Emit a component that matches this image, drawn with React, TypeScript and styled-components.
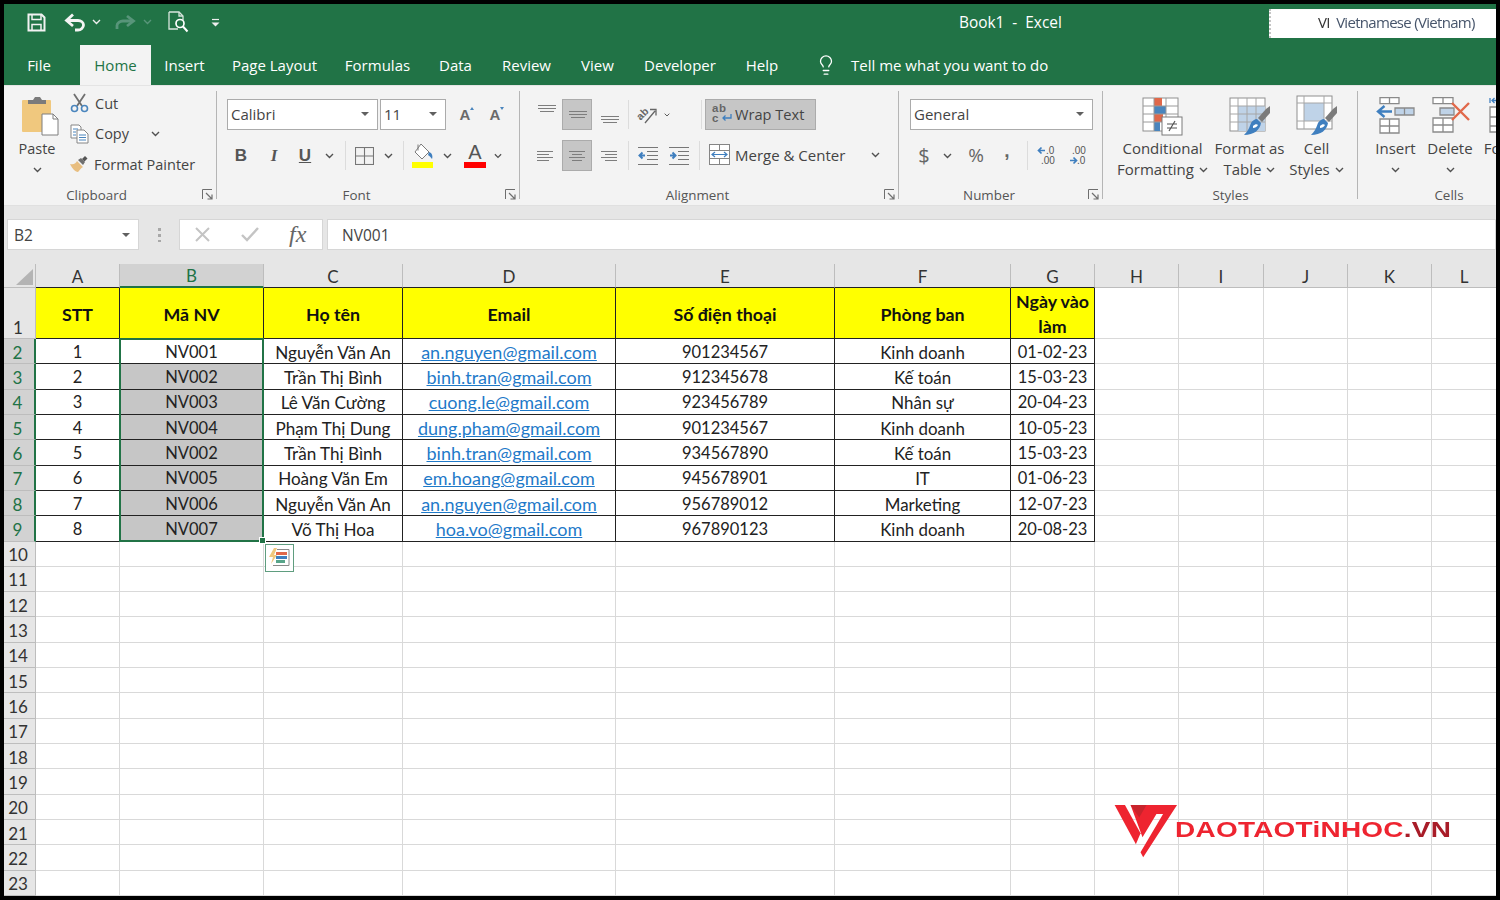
import React from "react";
import styled, { createGlobalStyle } from "styled-components";
import { Lightbulb } from "lucide-react";

const GREEN = "#217346";
const UI_FONT = `"Open Sans", "Noto Sans", sans-serif`;
const CELL_FONT = `Lato, "Noto Sans", sans-serif`;

const GlobalStyle = createGlobalStyle`
  html, body { margin: 0; padding: 0; background: #000; }
  body { width: 1500px; height: 900px; overflow: hidden; }
  * { box-sizing: border-box; }
`;

/* ---------- small drawings ---------- */

const Chevron = ({ c = "#505050" }: { c?: string }) => (
  <svg width="9" height="6" viewBox="0 0 9 6">
    <path d="M1 1l3.5 3.5L8 1" fill="none" stroke={c} strokeWidth="1.4" />
  </svg>
);

const Caret = () => (
  <svg width="8" height="4" viewBox="0 0 8 4">
    <path d="M0 0h8L4 4z" fill="#606060" />
  </svg>
);

const SaveIcon = () => (
  <svg width="19" height="19" viewBox="0 0 19 19" fill="none" stroke="#f2f2f2" strokeWidth="2">
    <path d="M1.5 1.5h13l3 3v13h-16z" />
    <path d="M5 1.5v5h9v-5" strokeWidth="1.5" />
    <path d="M5 17.5v-6h9v6" strokeWidth="1.5" />
  </svg>
);

const UndoIcon = ({ c }: { c: string }) => (
  <svg width="22" height="19" viewBox="0 0 22 19" fill="none" stroke={c} strokeWidth="2.8">
    <path d="M9 1.5L2.5 7.5 9 13" />
    <path d="M3 7.5h11c3 0 5.5 2 5.5 4.500s-2.500 5-5.500 5h-3" />
  </svg>
);

const RedoIcon = ({ c }: { c: string }) => (
  <svg width="22" height="19" viewBox="0 0 22 19" fill="none" stroke={c} strokeWidth="2.8">
    <path d="M13 3l6.500 5L13 13" />
    <path d="M19 8H9c-3 0-6 2-6 4.500V16" />
  </svg>
);

const PreviewIcon = () => (
  <svg width="21" height="22" viewBox="0 0 21 22" fill="none" stroke="#d8e6de" strokeWidth="1.3">
    <path d="M1 1h10l4 4v4M1 1v17h9" />
    <path d="M11 1v4h4" />
    <circle cx="12" cy="12.500" r="4" strokeWidth="1.700" stroke="#fff" />
    <path d="M15 15.500l4.500 5" strokeWidth="2" stroke="#fff" />
  </svg>
);

const CustomizeIcon = () => (
  <svg width="9" height="9" viewBox="0 0 9 9">
    <path d="M1 1.500h7" stroke="#eee" strokeWidth="1.200" />
    <path d="M0.500 4.500h8L4.500 8.500z" fill="#eee" />
  </svg>
);

const PasteIcon = () => (
  <svg width="40" height="40" viewBox="0 0 40 40">
    <rect x="1" y="4" width="29" height="32" rx="1" fill="#f0c87e" />
    <path d="M7 4h5l2-3h5l2 3h4v4H7z" fill="#7b7b7b" />
    <path d="M21 18h11l5 5v16H21z" fill="#fff" stroke="#7f7f7f" />
    <path d="M32 18v5h5" fill="none" stroke="#7f7f7f" />
  </svg>
);

const CutIcon = () => (
  <svg width="19" height="20" viewBox="0 0 19 20" fill="none">
    <path d="M4 1l8 12M15 1L7 13" stroke="#6f6f6f" strokeWidth="1.800" />
    <circle cx="4.500" cy="15.500" r="3" stroke="#4a85bd" strokeWidth="1.600" />
    <circle cx="14.500" cy="15.500" r="3" stroke="#4a85bd" strokeWidth="1.600" />
  </svg>
);

const CopyIcon = () => (
  <svg width="19" height="20" viewBox="0 0 19 20" fill="#fff" stroke="#858585">
    <path d="M1 1h8l2 2v11H1z" />
    <path d="M7 6h7l4 4v9H7z" />
    <path d="M3 5h5M3 8h3M3 11h3M9 11h7M9 13.500h7M9 16h7" stroke="#4a85bd" />
  </svg>
);

const PainterIcon = () => (
  <svg width="18" height="17" viewBox="0 0 18 17">
    <path d="M0 8c4 1 6-1 7-3l6 6c-2 1-4 4-5 5-3 0-6-4-8-8z" fill="#e8be80" />
    <path d="M8 4l3-2 4 4-2 3z" fill="#6f6f6f" />
    <path d="M12 3l3-3 2.500 2.500-3 3z" fill="#555" />
  </svg>
);

const BordersIcon = () => (
  <svg width="19" height="18" viewBox="0 0 19 18" fill="none" stroke="#767676" strokeWidth="1.100">
    <rect x="0.500" y="0.500" width="18" height="17" />
    <path d="M9.500 0.500v17M0.500 9h18" />
  </svg>
);

const FillIcon = () => (
  <svg width="22" height="25" viewBox="0 0 22 25">
    <path d="M9 1l8 8-7 7-7-7z" fill="#fff" stroke="#7b7b7b" />
    <path d="M6 1.500v6" stroke="#7b7b7b" />
    <path d="M17 9c3 1 4 4 3 7-1-1-2-3-4-4z" fill="#3f7fbf" />
    <rect x="0" y="19" width="21" height="6" fill="#ffff00" />
  </svg>
);

const Lines = ({ rows }: { rows: number[][] }) => (
  <svg width="22" height="22" viewBox="0 0 22 22" stroke="#7d7d7d" strokeWidth="1">
    {rows.map(([a, b, y]) => (
      <path key={`${a}-${y}`} d={`M${a} ${y + 0.5}H${b}`} />
    ))}
  </svg>
);

const OrientIcon = () => (
  <svg width="24" height="24" viewBox="0 0 24 24">
    <text x="2" y="15" transform="rotate(-45 7 12)" fontFamily="Liberation Sans" fontWeight="700" fontSize="10.500" fill="#666">ab</text>
    <path d="M10 20L20 8M15 6.500h6v6" fill="none" stroke="#666" strokeWidth="1.300" />
  </svg>
);

const IndentIcon = ({ out }: { out?: boolean }) => (
  <svg width="20" height="18" viewBox="0 0 20 18">
    <path d="M0 0.500h20M9 4.500h11M9 8.500h11M9 12.500h11M0 17.500h20" stroke="#777" fill="none" />
    {out ? (
      <path d="M7 8.500H2M4.500 5.500L1.500 8.500l3 3" stroke="#3f7fbf" strokeWidth="2" fill="none" />
    ) : (
      <path d="M1 8.500h5M3.500 5.500l3 3-3 3" stroke="#3f7fbf" strokeWidth="2" fill="none" />
    )}
  </svg>
);

const WrapIcon = () => (
  <svg width="23" height="25" viewBox="0 0 23 25">
    <text x="1" y="11" fontFamily="Liberation Sans" fontWeight="700" fontSize="11.500" fill="#666" letterSpacing="0.6">ab</text>
    <text x="1" y="21" fontFamily="Liberation Sans" fontWeight="700" fontSize="11.500" fill="#666">c</text>
    <path d="M20 13v4h-8M14.500 14.500l-2.500 2.500 2.500 2.500" fill="none" stroke="#3f7fbf" strokeWidth="1.300" />
  </svg>
);

const MergeIcon = () => (
  <svg width="21" height="21" viewBox="0 0 21 21" fill="none" stroke="#858585">
    <rect x="0.500" y="0.500" width="20" height="20" fill="#fff" />
    <path d="M0.500 6.500h20M0.500 14.500h20M10.500 0.500v6M10.500 14.500v6" />
    <path d="M3 10.500h15M6 8l-3 2.500L6 13M15 8l3 2.500-3 2.500" stroke="#3f7fbf" strokeWidth="1.200" />
  </svg>
);

const DecimalIcon = ({ more }: { more?: boolean }) => (
  <svg width="20" height="22" viewBox="0 0 20 22" fontFamily="Liberation Sans" fontSize="10" fill="#555">
    {more ? (
      <>
        <path d="M8 5.500H2M4.500 2.500l-3 3 3 3" stroke="#3f7fbf" strokeWidth="1.700" fill="none" />
        <text x="9" y="9">.0</text>
        <text x="4" y="19">.00</text>
      </>
    ) : (
      <>
        <text x="4" y="9">.00</text>
        <path d="M2 15.500h6M5.500 12.500l3 3-3 3" stroke="#3f7fbf" strokeWidth="1.700" fill="none" />
        <text x="9" y="19">.0</text>
      </>
    )}
  </svg>
);

const CondIcon = () => (
  <svg width="42" height="39" viewBox="0 0 42 39">
    <rect x="1" y="1" width="35" height="33" fill="#fff" stroke="#8f8f8f" />
    <rect x="12" y="1" width="8" height="8" fill="#e0684a" />
    <rect x="12" y="9" width="12" height="8" fill="#4a85bd" />
    <rect x="12" y="17" width="9" height="8" fill="#e0684a" />
    <rect x="12" y="25" width="6" height="9" fill="#4a85bd" />
    <path d="M1 9h35M1 17h35M1 25h35M12 1v33M24 1v33" stroke="#9a9a9a" fill="none" />
    <rect x="20" y="20" width="20" height="18" fill="#fff" stroke="#7b7b7b" />
    <path d="M25 27h10M25 31h10M33 24l-6 10" stroke="#555" strokeWidth="1.200" fill="none" />
  </svg>
);

const BrushTip = () => (
  <>
    <path d="M37 12l4-3v7l-8 9-4-4z" fill="#7b7b7b" />
    <path d="M28 22l4 4c-1 7-7 12-17 12 3-3 5-6 7-12 1-2 4-4 6-4z" fill="#3f7fbf" />
    <path d="M24 29c2-2 4-2 5-1-1 2-3 3-5 3z" fill="#fff" />
  </>
);

const TableStyleIcon = () => (
  <svg width="42" height="39" viewBox="0 0 42 39">
    <rect x="1" y="1" width="35" height="33" fill="#fff" stroke="#8f8f8f" />
    <rect x="9" y="9" width="27" height="25" fill="#bfd3e8" />
    <path d="M1 9h35M1 17h35M1 25h35M9 1v33M18 1v33M27 1v33" stroke="#a6a6a6" fill="none" />
    <BrushTip />
  </svg>
);

const CellStyleIcon = () => (
  <svg width="42" height="41" viewBox="0 0 42 41">
    <g transform="translate(0 2)">
      <rect x="1" y="-1" width="35" height="33" fill="#fff" stroke="#8f8f8f" />
      <rect x="8" y="6" width="20" height="18" fill="#bfd3e8" />
      <path d="M1 6h35M1 24h35M8 -1v33M28 -1v33" stroke="#a6a6a6" fill="none" />
      <BrushTip />
    </g>
  </svg>
);

const InsertIcon = () => (
  <svg width="40" height="39" viewBox="0 0 40 39" fill="#fff" stroke="#8a8a8a" strokeWidth="1.300">
    <path d="M4 0.700h19v6H4zM13.500 0.700v6" />
    <path d="M19 11h19v7H19z" fill="#bfd3e8" />
    <path d="M28.500 11v7" />
    <path d="M4 22h19v14H4zM4 29h19M13.500 22v14" />
    <path d="M16 14.500H3M8.500 9L2 14.500 8.500 20" fill="none" stroke="#3f7fbf" strokeWidth="2.400" />
  </svg>
);

const DeleteIcon = () => (
  <svg width="40" height="39" viewBox="0 0 40 39" fill="#fff" stroke="#8a8a8a" strokeWidth="1.300">
    <path d="M3 0.700h20v6H3zM13 0.700v6" />
    <path d="M10 11h14v7H10z" fill="#bfd3e8" />
    <path d="M3 21h20v14H3zM3 28h20M13 21v14" />
    <path d="M22 6l17 17M39 6L22 23" stroke="#e0684a" strokeWidth="2.400" fill="none" />
  </svg>
);

const FormatCellsIcon = () => (
  <svg width="40" height="39" viewBox="0 0 40 39" fill="#fff" stroke="#8a8a8a" strokeWidth="1.300">
    <path d="M1 1v5M9 3.500H3M5.500 1L3 3.500 5.500 6" stroke="#3f7fbf" fill="none" />
    <path d="M1 10h30v25H1zM1 20h30M1 29h30" />
  </svg>
);

const LauncherIcon = () => (
  <svg width="11" height="11" viewBox="0 0 11 11" fill="none" stroke="#6e6e6e">
    <path d="M0.500 10V0.500H10" />
    <path d="M4 4l6 6M10 5.500V10H5.500" strokeWidth="1.200" />
  </svg>
);

const QuickIcon = () => (
  <svg width="21" height="19" viewBox="0 0 21 19">
    <path d="M5 0L0 9h4L2 16l6-9H5l3-7z" fill="#f0c87e" />
    <path d="M8 1.500h12v16H4" fill="none" stroke="#8a8a8a" />
    <rect x="7" y="4" width="11" height="3" fill="#e0684a" />
    <rect x="7" y="8" width="11" height="3" fill="#3f7fbf" />
    <rect x="7" y="12" width="9" height="3" fill="#58a58a" />
  </svg>
);

const LogoMark = () => (
  <svg width="73" height="62" viewBox="0 0 220 186">
    <path d="M14 15h31l47 85-14 33z" fill="#ee2430" />
    <path d="M62 15h140L100 172l-8-15 68-115h-20L98 112z" fill="#ee2430" />
    <path d="M62 15h48L88 52z" fill="#c8242c" />
  </svg>
);

/* ---------- title bar and tabs ---------- */

const Screen = styled.div`
  margin: 4px 0 0 4px;
  width: 1492px;
  height: 892px;
  overflow: hidden;
  background: #fff;
  display: flex;
  flex-direction: column;
  font-family: ${UI_FONT};
  color: #444;
`;

const TitleBar = styled.div`
  height: 38px;
  flex: none;
  background: ${GREEN};
  display: grid;
  grid-template-columns: 955px 1fr 227px;
`;

const Qat = styled.div`
  display: flex;
  align-items: center;
  padding-bottom: 2px;
`;

const QatSlot = styled.span<{ $w: number }>`
  width: ${(p) => p.$w}px;
  flex: none;
  display: flex;
  justify-content: center;
`;

const Title = styled.div`
  color: #fff;
  font-size: 15.400px;
  line-height: 37px;
  white-space: pre;
`;

const LangBar = styled.div`
  margin-top: 5px;
  height: 29px;
  background: #fff;
  border-left: 2px dotted #c4c4c4;
  padding-left: 47px;
  line-height: 27px;
  font-size: 15px;
  letter-spacing: -0.700px;
  color: #47556b;
  white-space: pre;
  filter: blur(0.4px);
`;

const LangCode = styled.span`
  color: #333;
`;

const TabRow = styled.div`
  height: 44px;
  flex: none;
  background: ${GREEN};
  display: flex;
  align-items: flex-end;
  border-bottom: 1px solid #e4e4e4;
`;

const Tab = styled.div<{ $w: number; $active?: boolean }>`
  width: ${(p) => p.$w}px;
  flex: none;
  height: 40px;
  display: flex;
  align-items: center;
  justify-content: center;
  font-size: 15px;
  color: ${(p) => (p.$active ? GREEN : "#fff")};
  background: ${(p) => (p.$active ? "#f3f3f3" : "transparent")};
  white-space: nowrap;
  &:first-child {
    margin-right: 6px;
  }
`;

const TellMe = styled.div`
  display: flex;
  align-items: center;
  height: 40px;
  padding-left: 22px;
  gap: 14px;
  color: #fff;
  font-size: 15px;
`;

/* ---------- ribbon ---------- */

const Ribbon = styled.div`
  height: 120px;
  flex: none;
  background: #f3f3f3;
  display: flex;
  border-bottom: 1px solid #e0e0e0;
`;

const Group = styled.section<{ $w: number }>`
  position: relative;
  width: ${(p) => p.$w}px;
  flex: none;
  display: flex;
  flex-direction: column;
  &::after {
    content: "";
    position: absolute;
    top: 5px;
    bottom: 6px;
    right: 0;
    width: 1px;
    background: #b5b5b5;
  }
`;

const GroupBody = styled.div`
  flex: 1;
  display: flex;
  min-height: 0;
`;

const GroupLabel = styled.div<{ $reserve?: number }>`
  height: 21px;
  flex: none;
  padding-right: ${(p) => p.$reserve ?? 0}px;
  text-align: center;
  font-size: 13.400px;
  line-height: 21px;
  color: #555;
  margin-bottom: -1px;
`;

const Launcher = styled.span`
  position: absolute;
  right: 4px;
  bottom: 5px;
  display: flex;
`;

const PasteCol = styled.div`
  width: 66px;
  flex: none;
  padding-top: 10px;
  display: flex;
  flex-direction: column;
  align-items: center;
`;

const BigText = styled.div`
  height: 21px;
  line-height: 21px;
  font-size: 15px;
  color: #444;
  white-space: nowrap;
  display: flex;
  align-items: center;
  gap: 5px;
`;

const PasteLabel = styled(BigText)`
  font-size: 14.500px;
`;

const PasteIconWrap = styled.div`
  height: 42px;
  padding-left: 7px;
`;

const ClipCol = styled.div`
  padding-top: 2px;
  display: grid;
  grid-auto-rows: 30.500px;
`;

const ClipRow = styled.div`
  display: flex;
  align-items: center;
  gap: 6px;
  font-size: 14.500px;
  color: #444;
`;

const ToolRows = styled.div<{ $left: number }>`
  padding: 13px 0 0 ${(p) => p.$left}px;
  display: grid;
  grid-template-rows: 31px 31px;
  row-gap: 10px;
`;

const ToolRow = styled.div`
  display: flex;
  align-items: center;
`;

const Slot = styled.span<{ $w: number; $pressed?: boolean }>`
  width: ${(p) => p.$w}px;
  height: 31px;
  flex: none;
  display: flex;
  align-items: center;
  justify-content: center;
  background: ${(p) => (p.$pressed ? "#c6c6c6" : "transparent")};
  border: 1px solid ${(p) => (p.$pressed ? "#ababab" : "transparent")};
`;

const Divider = styled.span<{ $w: number }>`
  width: ${(p) => p.$w}px;
  flex: none;
  height: 29px;
  display: flex;
  justify-content: center;
  &::before {
    content: "";
    width: 1px;
    background: #dcdcdc;
  }
`;

const FieldBox = styled.div<{ $w: number; $mr?: number }>`
  width: ${(p) => p.$w}px;
  margin-right: ${(p) => p.$mr ?? 0}px;
  height: 31px;
  flex: none;
  background: #fff;
  border: 1px solid #ababab;
  padding: 0 8px 2px 3px;
  display: flex;
  align-items: center;
  justify-content: space-between;
  font-size: 15px;
  color: #444;
`;

const FontGlyph = styled.span<{ $kind: "b" | "i" | "u" }>`
  font-size: 17px;
  color: #555;
  font-weight: 700;
  font-style: ${(p) => (p.$kind === "i" ? "italic" : "normal")};
  text-decoration: ${(p) => (p.$kind === "u" ? "underline" : "none")};
  font-family: ${(p) => (p.$kind === "i" ? '"Liberation Serif", serif' : '"Liberation Sans", sans-serif')};
`;

const GrowGlyph = styled.span<{ $up?: boolean }>`
  position: relative;
  font-family: "Liberation Sans", sans-serif;
  font-weight: 700;
  font-size: 15px;
  color: #6b6b6b;
  line-height: 18px;
  &::after {
    content: "";
    position: absolute;
    right: -4px;
    top: 1px;
    border-left: 2.500px solid transparent;
    border-right: 2.500px solid transparent;
    border-bottom: ${(p) => (p.$up ? "3px solid #4a85bd" : "none")};
    border-top: ${(p) => (p.$up ? "none" : "3px solid #4a85bd")};
  }
`;

const FontColorGlyph = styled.span`
  width: 22px;
  height: 25px;
  display: flex;
  justify-content: center;
  font-family: "Liberation Sans", sans-serif;
  font-size: 20px;
  line-height: 19px;
  color: #555;
  border-bottom: 6px solid #ff0000;
`;

const WrapButton = styled.div`
  margin-left: 1px;
  width: 111px;
  height: 31px;
  flex: none;
  padding: 0 0 2px 5px;
  display: flex;
  align-items: center;
  gap: 1px;
  background: #c6c6c6;
  border: 1px solid #ababab;
  font-size: 14.600px;
  white-space: nowrap;
`;

const MergeButton = styled.div`
  margin-left: 4px;
  padding-bottom: 2px;
  display: flex;
  align-items: center;
  font-size: 15px;
  gap: 5px;
  white-space: nowrap;
`;

const MergeChevron = styled.span`
  margin-left: 21px;
  display: flex;
`;

const NumberGlyph = styled.span<{ $size: number }>`
  font-size: ${(p) => p.$size}px;
  color: #666;
  line-height: 1;
`;

const CommaGlyph = styled(NumberGlyph)`
  font-family: "Liberation Sans", sans-serif;
  font-weight: 700;
  margin-top: -10px;
`;

const LargeButton = styled.div<{ $w: number; $ml?: number }>`
  width: ${(p) => p.$w}px;
  margin-left: ${(p) => p.$ml ?? 0}px;
  flex: none;
  padding-top: 9px;
  display: flex;
  flex-direction: column;
  align-items: center;
`;

const LargeIcon = styled.div`
  height: 43px;
  display: flex;
  align-items: flex-end;
  padding-bottom: 2px;
`;

/* ---------- formula bar ---------- */

const FormulaBar = styled.div`
  height: 58px;
  flex: none;
  background: #e6e6e6;
  padding: 13px 0 14px 3px;
  display: flex;
  font-size: 15.500px;
  color: #444;
`;

const NameBox = styled.div`
  width: 132px;
  background: #fff;
  border: 1px solid #d6d6d6;
  padding: 0 8px 0 6px;
  display: flex;
  align-items: center;
  justify-content: space-between;
`;

const Grip = styled.div`
  width: 40px;
  display: flex;
  align-items: center;
  justify-content: center;
  &::before {
    content: "";
    width: 3px;
    height: 14px;
    background: repeating-linear-gradient(#a8a8a8 0 3px, transparent 3px 6px);
  }
`;

const FxBox = styled.div`
  width: 144px;
  background: #fff;
  border: 1px solid #d6d6d6;
  margin-right: 4px;
  display: flex;
  align-items: center;
  padding-left: 15px;
  gap: 31px;
`;

const FxGlyph = styled.span`
  font-family: "Liberation Serif", serif;
  font-style: italic;
  font-size: 24px;
  color: #666;
  margin-left: -1px;
`;

const FormulaInput = styled.div`
  flex: 1;
  background: #fff;
  border: 1px solid #d6d6d6;
  padding-left: 14px;
  display: flex;
  align-items: center;
`;

/* ---------- sheet ---------- */

const Sheet = styled.div`
  position: relative;
  flex: none;
  display: grid;
  grid-template-columns: 32px 84px 144px 139px 213px 219px 176px 84px 84px 85px 84px 84px 65px;
  grid-template-rows: 24px 51px;
  grid-auto-rows: 25.320px;
  font-family: ${CELL_FONT};
  font-size: 16.500px;
  color: #222;
`;

const Corner = styled.div`
  background: #e6e6e6;
  border-right: 1px solid #bdbdbd;
  border-bottom: 1px solid #bdbdbd;
  display: flex;
  align-items: flex-end;
  justify-content: flex-end;
  padding: 0 2px 2px 0;
  &::before {
    content: "";
    border-left: 17px solid transparent;
    border-bottom: 16px solid #b4b4b4;
  }
`;

const ColHead = styled.div<{ $active?: boolean; $table?: boolean }>`
  background: ${(p) => (p.$active ? "#d2d2d2" : "#e6e6e6")};
  color: ${(p) => (p.$active ? GREEN : "#333")};
  border-right: 1px solid #bdbdbd;
  border-bottom: ${(p) => (p.$active ? `2px solid ${GREEN}` : p.$table ? "1px solid #222" : "1px solid #bdbdbd")};
  display: flex;
  align-items: flex-end;
  justify-content: center;
  font-size: 17px;
  line-height: 20px;
`;

const RowHead = styled.div<{ $active?: boolean; $tall?: boolean }>`
  background: ${(p) => (p.$active ? "#d2d2d2" : "#e6e6e6")};
  color: ${(p) => (p.$active ? GREEN : "#333")};
  border-right: ${(p) => (p.$active ? `2px solid ${GREEN}` : "1px solid #bdbdbd")};
  border-bottom: 1px solid #bdbdbd;
  display: flex;
  align-items: ${(p) => (p.$tall ? "flex-end" : "center")};
  justify-content: center;
  font-size: 17px;
  padding: ${(p) => (p.$tall ? "0 3px 0 0" : "2px 3px 0 0")};
`;

const Blank = styled.div`
  border-right: 1px solid #d9d9d9;
  border-bottom: 1px solid #d9d9d9;
`;

const HeaderCell = styled.div`
  background: #ffff00;
  border-right: 1px solid #222;
  border-bottom: 1px solid #222;
  display: flex;
  align-items: center;
  justify-content: center;
  text-align: center;
  font-size: 17.800px;
  font-weight: 700;
  line-height: 25px;
  padding-top: 2px;
  color: #111;
`;

const DataCell = styled.div<{ $shaded?: boolean; $size: number }>`
  background: ${(p) => (p.$shaded ? "#c6c6c6" : "#fff")};
  border-right: 1px solid #222;
  border-bottom: 1px solid #222;
  display: flex;
  align-items: center;
  justify-content: center;
  padding-top: 2px;
  font-size: ${(p) => p.$size}px;
  line-height: 21px;
  white-space: nowrap;
`;

const MailLink = styled.span`
  color: #1f7ac9;
  text-decoration: underline;
`;

const Selection = styled.div`
  grid-column: 3 / 4;
  grid-row: 3 / 11;
  position: absolute;
  inset: -1px 0 0 -1px;
  border: 2px solid ${GREEN};
  pointer-events: none;
`;

const FillHandle = styled.span`
  position: absolute;
  right: -4px;
  bottom: -4px;
  width: 7px;
  height: 7px;
  background: ${GREEN};
  border: 1px solid #fff;
`;

const QuickButton = styled.span`
  position: absolute;
  left: calc(100% + 3px);
  top: calc(100% + 4px);
  width: 29px;
  height: 28px;
  background: #fff;
  border: 1px solid #5f9d7f;
  display: flex;
  align-items: center;
  justify-content: center;
`;

const Logo = styled.div`
  position: absolute;
  left: 1106px;
  top: 536px;
  display: flex;
`;

const LogoText = styled.div`
  margin: 17px 0 0 -8px;
  font-family: "Liberation Sans", sans-serif;
  font-size: 21.500px;
  line-height: 26px;
  font-weight: 700;
  letter-spacing: 0.200px;
  color: #ee2430;
  white-space: nowrap;
  transform: scaleX(1.3);
  transform-origin: left center;
`;

const LogoTail = styled.span`
  color: #a81c28;
`;

/* ---------- data ---------- */

const TABS: [string, number][] = [
  ["File", 70],
  ["Home", 71],
  ["Insert", 67],
  ["Page Layout", 113],
  ["Formulas", 93],
  ["Data", 63],
  ["Review", 79],
  ["View", 63],
  ["Developer", 102],
  ["Help", 62],
];

const COLS = ["A", "B", "C", "D", "E", "F", "G", "H", "I", "J", "K", "L"];
const HEADERS = ["STT", "Mã NV", "Họ tên", "Email", "Số điện thoại", "Phòng ban", "Ngày vào làm"];
const COL_SIZES = [16.5, 16.5, 17.1, 18, 16.5, 16.9, 16.5];

const ROWS = [
  ["1", "NV001", "Nguyễn Văn An", "an.nguyen@gmail.com", "901234567", "Kinh doanh", "01-02-23"],
  ["2", "NV002", "Trần Thị Bình", "binh.tran@gmail.com", "912345678", "Kế toán", "15-03-23"],
  ["3", "NV003", "Lê Văn Cường", "cuong.le@gmail.com", "923456789", "Nhân sự", "20-04-23"],
  ["4", "NV004", "Phạm Thị Dung", "dung.pham@gmail.com", "901234567", "Kinh doanh", "10-05-23"],
  ["5", "NV002", "Trần Thị Bình", "binh.tran@gmail.com", "934567890", "Kế toán", "15-03-23"],
  ["6", "NV005", "Hoàng Văn Em", "em.hoang@gmail.com", "945678901", "IT", "01-06-23"],
  ["7", "NV006", "Nguyễn Văn An", "an.nguyen@gmail.com", "956789012", "Marketing", "12-07-23"],
  ["8", "NV007", "Võ Thị Hoa", "hoa.vo@gmail.com", "967890123", "Kinh doanh", "20-08-23"],
];

const TOP = [[4, 22, 1], [4, 22, 4], [6, 20, 7]];
const MIDDLE = [[3, 21, 7], [3, 21, 10], [5, 19, 13]];
const BOTTOM = [[3, 21, 12], [3, 21, 15], [5, 19, 18]];
const LEFT = [[3, 19, 6], [3, 15, 9], [3, 19, 12], [3, 15, 15]];
const CENTER = [[3, 19, 6], [6, 16, 9], [3, 19, 12], [6, 16, 15]];
const RIGHT = [[3, 19, 6], [7, 19, 9], [3, 19, 12], [7, 19, 15]];

const blanks = (row: number, from: number) =>
  COLS.slice(from).map((c) => <Blank key={`${c}${row}`} />);

export default function App() {
  return (
    <>
      <GlobalStyle />
      <Screen>
        <TitleBar>
          <Qat>
            <QatSlot $w={23} />
            <QatSlot $w={19}><SaveIcon /></QatSlot>
            <QatSlot $w={18} />
            <QatSlot $w={22}><UndoIcon c="#f4f4f4" /></QatSlot>
            <QatSlot $w={20}><Chevron c="#eee" /></QatSlot>
            <QatSlot $w={8} />
            <QatSlot $w={22}><RedoIcon c="#58957a" /></QatSlot>
            <QatSlot $w={22}><Chevron c="#58957a" /></QatSlot>
            <QatSlot $w={9} />
            <QatSlot $w={22}><PreviewIcon /></QatSlot>
            <QatSlot $w={22} />
            <QatSlot $w={9}><CustomizeIcon /></QatSlot>
          </Qat>
          <Title>Book1  -  Excel</Title>
          <LangBar><LangCode>VI</LangCode>  Vietnamese (Vietnam)</LangBar>
        </TitleBar>

        <TabRow>
          {TABS.map(([name, w]) => (
            <Tab key={name} $w={w} $active={name === "Home"}>{name}</Tab>
          ))}
          <TellMe>
            <Lightbulb size={22} strokeWidth={1.4} />
            Tell me what you want to do
          </TellMe>
        </TabRow>

        <Ribbon>
          <Group $w={213}>
            <GroupBody>
              <PasteCol>
                <PasteIconWrap><PasteIcon /></PasteIconWrap>
                <PasteLabel>Paste</PasteLabel>
                <BigText><Chevron /></BigText>
              </PasteCol>
              <ClipCol>
                <ClipRow><CutIcon />Cut</ClipRow>
                <ClipRow><CopyIcon />Copy<QatSlot $w={41}><Chevron /></QatSlot></ClipRow>
                <ClipRow><PainterIcon />Format Painter</ClipRow>
              </ClipCol>
            </GroupBody>
            <GroupLabel $reserve={28}>Clipboard</GroupLabel>
            <Launcher><LauncherIcon /></Launcher>
          </Group>

          <Group $w={303}>
            <GroupBody>
              <ToolRows $left={10}>
                <ToolRow>
                  <FieldBox $w={151} $mr={2}>Calibri<Caret /></FieldBox>
                  <FieldBox $w={66} $mr={4}>11<Caret /></FieldBox>
                  <Slot $w={30}><GrowGlyph $up>A</GrowGlyph></Slot>
                  <Slot $w={30}><GrowGlyph>A</GrowGlyph></Slot>
                </ToolRow>
                <ToolRow>
                  <Slot $w={28}><FontGlyph $kind="b">B</FontGlyph></Slot>
                  <Slot $w={38}><FontGlyph $kind="i">I</FontGlyph></Slot>
                  <Slot $w={24}><FontGlyph $kind="u">U</FontGlyph></Slot>
                  <Slot $w={24}><Chevron /></Slot>
                  <Divider $w={8} />
                  <Slot $w={30}><BordersIcon /></Slot>
                  <Slot $w={18}><Chevron /></Slot>
                  <Divider $w={12} />
                  <Slot $w={28}><FillIcon /></Slot>
                  <Slot $w={20}><Chevron /></Slot>
                  <Slot $w={36}><FontColorGlyph>A</FontColorGlyph></Slot>
                  <Slot $w={10}><Chevron /></Slot>
                </ToolRow>
              </ToolRows>
            </GroupBody>
            <GroupLabel $reserve={24}>Font</GroupLabel>
            <Launcher><LauncherIcon /></Launcher>
          </Group>

          <Group $w={379}>
            <GroupBody>
              <ToolRows $left={8}>
                <ToolRow>
                  <Slot $w={34}><Lines rows={TOP} /></Slot>
                  <Slot $w={30} $pressed><Lines rows={MIDDLE} /></Slot>
                  <Slot $w={33}><Lines rows={BOTTOM} /></Slot>
                  <Divider $w={6} />
                  <Slot $w={32}><OrientIcon /></Slot>
                  <Slot $w={8}><Chevron /></Slot>
                  <Slot $w={27} />
                  <Divider $w={6} />
                  <WrapButton><WrapIcon />Wrap Text</WrapButton>
                </ToolRow>
                <ToolRow>
                  <Slot $w={34}><Lines rows={LEFT} /></Slot>
                  <Slot $w={30} $pressed><Lines rows={CENTER} /></Slot>
                  <Slot $w={33}><Lines rows={RIGHT} /></Slot>
                  <Divider $w={6} />
                  <Slot $w={33}><IndentIcon out /></Slot>
                  <Slot $w={29}><IndentIcon /></Slot>
                  <Divider $w={12} />
                  <MergeButton>
                    <MergeIcon />Merge &amp; Center
                    <MergeChevron><Chevron /></MergeChevron>
                  </MergeButton>
                </ToolRow>
              </ToolRows>
            </GroupBody>
            <GroupLabel $reserve={24}>Alignment</GroupLabel>
            <Launcher><LauncherIcon /></Launcher>
          </Group>

          <Group $w={204}>
            <GroupBody>
              <ToolRows $left={11}>
                <ToolRow>
                  <FieldBox $w={183}>General<Caret /></FieldBox>
                </ToolRow>
                <ToolRow>
                  <Slot $w={28}><NumberGlyph $size={20}>$</NumberGlyph></Slot>
                  <Slot $w={18}><Chevron /></Slot>
                  <Slot $w={40}><NumberGlyph $size={19}>%</NumberGlyph></Slot>
                  <Slot $w={22}><CommaGlyph $size={19}>,</CommaGlyph></Slot>
                  <Divider $w={18} />
                  <Slot $w={22}><DecimalIcon more /></Slot>
                  <Slot $w={40}><DecimalIcon /></Slot>
                </ToolRow>
              </ToolRows>
            </GroupBody>
            <GroupLabel $reserve={24}>Number</GroupLabel>
            <Launcher><LauncherIcon /></Launcher>
          </Group>

          <Group $w={255}>
            <GroupBody>
              <LargeButton $w={97} $ml={11}>
                <LargeIcon><CondIcon /></LargeIcon>
                <BigText>Conditional</BigText>
                <BigText>Formatting <Chevron /></BigText>
              </LargeButton>
              <LargeButton $w={77}>
                <LargeIcon><TableStyleIcon /></LargeIcon>
                <BigText>Format as</BigText>
                <BigText>Table <Chevron /></BigText>
              </LargeButton>
              <LargeButton $w={57}>
                <LargeIcon><CellStyleIcon /></LargeIcon>
                <BigText>Cell</BigText>
                <BigText>Styles <Chevron /></BigText>
              </LargeButton>
            </GroupBody>
            <GroupLabel>Styles</GroupLabel>
          </Group>

          <Group $w={182}>
            <GroupBody>
              <LargeButton $w={45} $ml={15}>
                <LargeIcon><InsertIcon /></LargeIcon>
                <BigText>Insert</BigText>
                <BigText><Chevron /></BigText>
              </LargeButton>
              <LargeButton $w={64}>
                <LargeIcon><DeleteIcon /></LargeIcon>
                <BigText>Delete</BigText>
                <BigText><Chevron /></BigText>
              </LargeButton>
              <LargeButton $w={54}>
                <LargeIcon><FormatCellsIcon /></LargeIcon>
                <BigText>Format</BigText>
                <BigText><Chevron /></BigText>
              </LargeButton>
            </GroupBody>
            <GroupLabel>Cells</GroupLabel>
          </Group>
        </Ribbon>

        <FormulaBar>
          <NameBox>B2<Caret /></NameBox>
          <Grip />
          <FxBox>
            <svg width="15" height="15" viewBox="0 0 15 15" stroke="#c4c4c4" strokeWidth="2">
              <path d="M1 1l13 13M14 1L1 14" />
            </svg>
            <svg width="18" height="15" viewBox="0 0 18 15" fill="none" stroke="#c4c4c4" strokeWidth="2.400">
              <path d="M1 8l5 5L17 1" />
            </svg>
            <FxGlyph>fx</FxGlyph>
          </FxBox>
          <FormulaInput>NV001</FormulaInput>
        </FormulaBar>

        <Sheet>
          <Corner />
          {COLS.map((c, i) => (
            <ColHead key={c} $active={c === "B"} $table={i < 7}>{c}</ColHead>
          ))}

          <RowHead $tall>1</RowHead>
          {HEADERS.map((h) => <HeaderCell key={h}>{h}</HeaderCell>)}
          {blanks(1, 7)}

          {ROWS.map((row, r) => (
            <React.Fragment key={r}>
              <RowHead $active>{r + 2}</RowHead>
              {row.map((v, c) => (
                <DataCell key={c} $shaded={c === 1 && r > 0} $size={COL_SIZES[c]}>
                  {c === 3 ? <MailLink>{v}</MailLink> : v}
                </DataCell>
              ))}
              {blanks(r + 2, 7)}
            </React.Fragment>
          ))}

          {Array.from({ length: 14 }, (_, i) => i + 10).map((n) => (
            <React.Fragment key={n}>
              <RowHead>{n}</RowHead>
              {blanks(n, 0)}
            </React.Fragment>
          ))}

          <Selection>
            <FillHandle />
            <QuickButton><QuickIcon /></QuickButton>
          </Selection>

          <Logo>
            <LogoMark />
            <LogoText>DAOTAOTiNHOC<LogoTail>.VN</LogoTail></LogoText>
          </Logo>
        </Sheet>
      </Screen>
    </>
  );
}
